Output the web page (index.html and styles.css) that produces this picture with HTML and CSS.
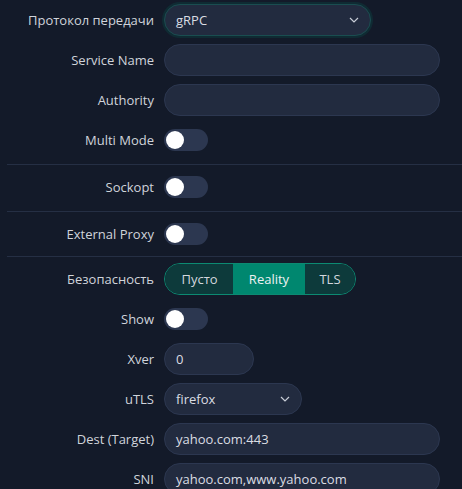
FILE: index.html
```html
<!DOCTYPE html>
<html>
<head>
<meta charset="utf-8">
<link rel="stylesheet" href="styles.css">
</head>
<body>
<div class="form">
  <div class="row">
    <label class="lbl">Протокол передачи</label>
    <div class="ctl"><div class="select focused w-proto"><span>gRPC</span><svg class="chev" width="10" height="6" viewBox="0 0 10 6"><path d="M1 1l4 4 4-4" fill="none" stroke="#c7ccd6" stroke-width="1.2"/></svg></div></div>
  </div>
  <div class="row">
    <label class="lbl">Service Name</label>
    <div class="ctl"><div class="input w-full"></div></div>
  </div>
  <div class="row">
    <label class="lbl">Authority</label>
    <div class="ctl"><div class="input w-full"></div></div>
  </div>
  <div class="row">
    <label class="lbl">Multi Mode</label>
    <div class="ctl"><span class="switch"><span class="knob"></span></span></div>
  </div>
  <div class="divider"></div>
  <div class="row">
    <label class="lbl">Sockopt</label>
    <div class="ctl"><span class="switch"><span class="knob"></span></span></div>
  </div>
  <div class="divider"></div>
  <div class="row">
    <label class="lbl">External Proxy</label>
    <div class="ctl"><span class="switch"><span class="knob"></span></span></div>
  </div>
  <div class="divider"></div>
  <div class="row">
    <label class="lbl">Безопасность</label>
    <div class="ctl">
      <div class="radio-group">
        <span class="rb rb-first">Пусто</span><span class="rb rb-active">Reality</span><span class="rb rb-last">TLS</span>
      </div>
    </div>
  </div>
  <div class="row">
    <label class="lbl">Show</label>
    <div class="ctl"><span class="switch"><span class="knob"></span></span></div>
  </div>
  <div class="row">
    <label class="lbl">Xver</label>
    <div class="ctl"><div class="input w-xver">0</div></div>
  </div>
  <div class="row">
    <label class="lbl">uTLS</label>
    <div class="ctl"><div class="select w-utls"><span>firefox</span><svg class="chev" width="10" height="6" viewBox="0 0 10 6"><path d="M1 1l4 4 4-4" fill="none" stroke="#c7ccd6" stroke-width="1.2"/></svg></div></div>
  </div>
  <div class="row">
    <label class="lbl">Dest (Target)</label>
    <div class="ctl"><div class="input w-full">yahoo.com:443</div></div>
  </div>
  <div class="row">
    <label class="lbl">SNI</label>
    <div class="ctl"><div class="input w-full">yahoo.com,www.yahoo.com</div></div>
  </div>
</div>
</body>
</html>
```
FILE: styles.css
```css
html, body {
  margin: 0;
  padding: 0;
  background: #131a29;
  height: 100%;
  overflow: hidden;
}
body {
  font-family: "Open Sans", "Noto Sans", sans-serif;
  font-size: 13px;
  color: #d3d7de;
}
.form {
  padding: 4px 0 0 7px;
}
.row {
  display: flex;
  align-items: center;
  height: 32px;
  margin-bottom: 8px;
}
.lbl {
  width: 147px;
  text-align: right;
  padding-right: 10px;
  color: #d0d4db;
  white-space: nowrap;
}
.ctl {
  display: flex;
  align-items: center;
}
.input, .select {
  box-sizing: border-box;
  height: 32px;
  border-radius: 16px;
  background: #222b3f;
  border: 1px solid #2c3750;
  padding: 0 11px;
  display: flex;
  align-items: center;
  color: #dadde3;
}
.w-full { width: 276px; }
.w-xver { width: 90px; }
.w-proto { width: 207px; }
.w-utls { width: 138px; }
.select {
  justify-content: space-between;
  padding-right: 11px;
}
.select.focused {
  border-color: #1a4d50;
  box-shadow: 0 0 0 2px rgba(0, 120, 100, 0.18);
}
.chev { display: block; }
.switch {
  position: relative;
  display: inline-block;
  width: 44px;
  height: 22px;
  border-radius: 11px;
  background: #2c3750;
}
.knob {
  position: absolute;
  left: 2px;
  top: 2px;
  width: 18px;
  height: 18px;
  border-radius: 50%;
  background: #ffffff;
}
.divider {
  height: 1px;
  background: #252f44;
  margin: 0 0 6px 0;
}
.divider + .row + .divider + .row + .divider {
  margin-top: -2px;
}
.radio-group {
  display: flex;
  height: 32px;
  box-sizing: border-box;
  border: 1px solid #0c8a72;
  border-radius: 16px;
  overflow: hidden;
}
.rb {
  display: flex;
  align-items: center;
  justify-content: center;
  background: #0d3a3b;
  color: #d3d7de;
}
.rb-first { width: 67px; padding-left: 1px; }
.rb-active { width: 72px; background: #00876f; color: #eef2f2; }
.rb-last { width: 50px; }
```
